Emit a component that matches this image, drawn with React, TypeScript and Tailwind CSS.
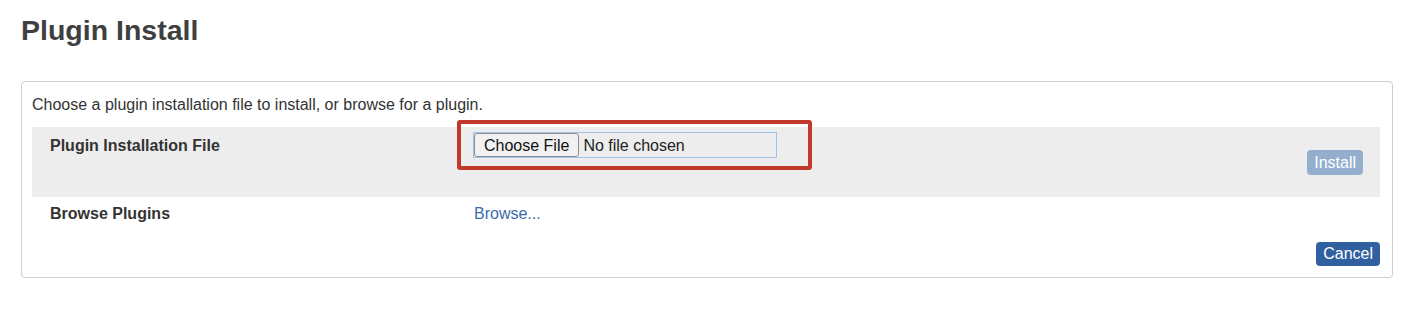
import React from "react";

export default function App() {
  return (
    <div
      className="w-[1408px] h-[318px] bg-white pl-[21px] pr-[15px] pt-[14px] text-[#333]"
      style={{ fontFamily: '"Liberation Sans", Arial, Helvetica, sans-serif' }}
    >
      <h1 className="text-[28.5px] leading-[32px] font-bold text-[#3f3f3f]">Plugin Install</h1>
      <div className="mt-[35px] border border-[#cfcfcf] rounded-[4px] pl-[10px] pr-[12px] pt-[13px] pb-[11px]">
        <p className="text-[16px] leading-[20px] text-[#333]">
          Choose a plugin installation file to install, or browse for a plugin.
        </p>
        <div className="mt-[12px] h-[70px] bg-[#ededed] flex">
          <div className="w-[441px] pl-[18px] pt-[9px] text-[16px] leading-[20px] font-bold text-[#333]">
            Plugin Installation File
          </div>
          <div className="flex-1 pt-[5px]">
            <div className="relative w-[304px]">
              <div className="h-[26px] w-[304px] border border-[#9ec3ea] bg-[#ededed] flex items-center">
                <div className="h-[24px] px-[9px] border border-[#8d8d8d] rounded-[3px] bg-[#f1f1f1] text-[16px] leading-[23px] text-[#111]">
                  Choose File
                </div>
                <span className="ml-[4px] pt-[2px] text-[16px] leading-[20px] text-[#222]">No file chosen</span>
              </div>
              <div className="absolute left-[-16px] top-[-12px] w-[355px] h-[50px] border-[4px] border-[#c0392b] rounded-[3px]" />
            </div>
          </div>
          <div className="pt-[23px] pr-[17px]">
            <button className="h-[25px] px-[7px] rounded-[4px] bg-[#94afce] text-white text-[16px] leading-[25px]">
              Install
            </button>
          </div>
        </div>
        <div className="h-[30px] flex">
          <div className="w-[441px] pl-[18px] pt-[7px] text-[16px] leading-[20px] font-bold text-[#333]">
            Browse Plugins
          </div>
          <div className="pt-[7px] pl-[1px] text-[16px] leading-[20px] text-[#3b6eab]">Browse...</div>
        </div>
        <div className="mt-[15px] flex justify-end">
          <button className="h-[24px] px-[7px] rounded-[4px] bg-[#30609f] text-white text-[16px] leading-[24px]">
            Cancel
          </button>
        </div>
      </div>
    </div>
  );
}
